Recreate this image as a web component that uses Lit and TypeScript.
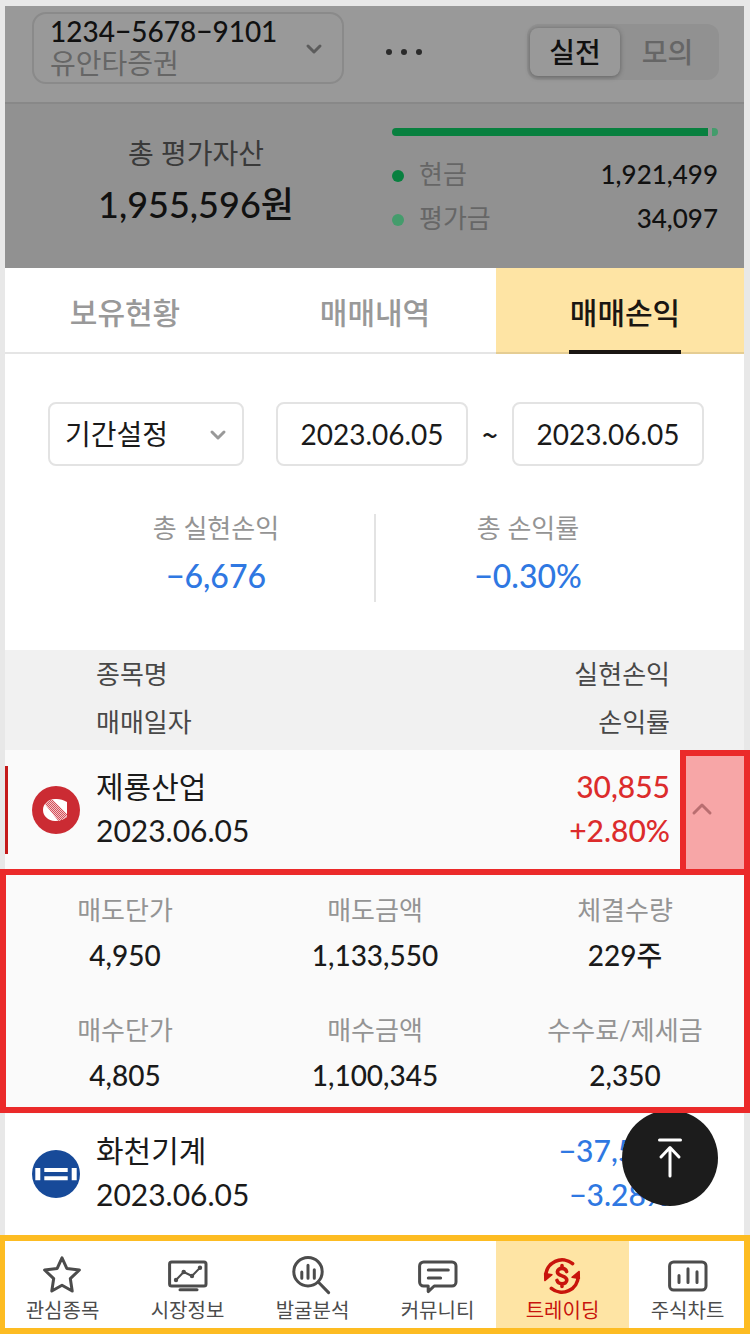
import { LitElement, html, css, svg, nothing } from "lit";
import { customElement, property, state } from "lit/decorators.js";
import { classMap } from "lit/directives/class-map.js";
import { styleMap } from "lit/directives/style-map.js";

const reset = css`
  * {
    box-sizing: border-box;
  }
  button,
  input,
  select {
    font: inherit;
    color: inherit;
    margin: 0;
    padding: 0;
    border: 0;
    border-radius: 0;
    background: none;
    appearance: none;
  }
  button,
  select {
    cursor: pointer;
  }
  p,
  h2,
  dl,
  dd {
    margin: 0;
    font-weight: inherit;
  }
  svg {
    display: block;
    overflow: visible;
    fill: none;
    stroke: currentColor;
    stroke-linecap: round;
    stroke-linejoin: round;
  }
`;

const chevronDown = html`<svg width="16" height="12" viewBox="0 0 16 12" stroke-width="3" aria-hidden="true">
  <path d="M2 4l6 6 6-6" />
</svg>`;

/* ---------- account bar and asset summary ---------- */

@customElement("account-header")
export class AccountHeader extends LitElement {
  @state() private mode = "실전";

  private cash = 1921499;
  private stock = 34097;

  static styles = [
    reset,
    css`
      :host {
        display: block;
        color: #111;
      }
      .bar {
        display: flex;
        align-items: flex-start;
        padding: 12px 31px 18px 32px;
        background: #999;
        border-bottom: 2px solid #888;
      }
      .account {
        display: flex;
        align-items: center;
        justify-content: space-between;
        width: 312px;
        height: 72px;
        padding: 0 20px 0 16px;
        border: 2px solid #8a8a8a;
        border-radius: 14px;
        text-align: left;
        font-size: 28px;
        line-height: 32px;
      }
      .label {
        padding-bottom: 2px;
      }
      .number,
      .broker {
        display: block;
      }
      .number {
        font-weight: 500;
      }
      .broker {
        color: #666;
      }
      .account svg {
        color: #5c5c5c;
      }
      .more {
        display: flex;
        gap: 9px;
        margin: 37px auto 0 42px;
      }
      .more i {
        width: 6px;
        height: 6px;
        border-radius: 50%;
        background: #2b2b2b;
      }
      .modes {
        display: grid;
        grid-template-columns: 90px 95px;
        margin-top: 12px;
        padding: 4px 4px 4px 3px;
        border-radius: 12px;
        background: #919191;
      }
      .mode {
        height: 48px;
        border-radius: 8px;
        font-size: 28px;
        line-height: 48px;
        color: #666;
        font-weight: 500;
      }
      .mode.on {
        background: #999;
        color: #111;
        box-shadow: 0 1px 5px rgba(0, 0, 0, 0.35);
      }
      .assets {
        display: grid;
        grid-template-columns: 392fr 358fr;
        height: 164px;
        background: #919191;
      }
      .total {
        padding-top: 29px;
        text-align: center;
      }
      .caption {
        font-size: 28px;
        line-height: 40px;
        color: #3a3a3a;
      }
      .amount {
        margin-top: 7px;
        font-size: 36px;
        line-height: 48px;
        font-weight: 500;
      }
      .split {
        padding: 24px 32px 0 0;
      }
      .meter {
        display: flex;
        gap: 4px;
        height: 8px;
        margin-bottom: 18px;
        border-radius: 4px;
        overflow: hidden;
      }
      .cash {
        background: #08803f;
      }
      .stock {
        background: #449c6c;
      }
      .line {
        display: flex;
        align-items: flex-start;
        height: 44px;
        font-size: 26px;
        line-height: 40px;
      }
      .dot {
        width: 12px;
        height: 12px;
        margin: 16px 15px 0 0;
        border-radius: 50%;
      }
      .line dt {
        flex: 1;
        color: #666;
      }
      .line dd {
        font-weight: 500;
      }
    `,
  ];

  render() {
    const f = (n: number) => n.toLocaleString("en-US");
    return html`
      <div class="bar">
        <button class="account" aria-haspopup="listbox">
          <span class="label"><span class="number">1234−5678−9101</span><span class="broker">유안타증권</span></span>
          ${chevronDown}
        </button>
        <button class="more" aria-label="더보기"><i></i><i></i><i></i></button>
        <div class="modes" role="group" aria-label="투자 모드">
          ${["실전", "모의"].map(
            (m) => html`<button
              class=${classMap({ mode: true, on: this.mode === m })}
              aria-pressed=${this.mode === m ? "true" : "false"}
              @click=${() => (this.mode = m)}
            >${m}</button>`,
          )}
        </div>
      </div>
      <div class="assets">
        <div class="total">
          <p class="caption">총 평가자산</p>
          <p class="amount">${f(this.cash + this.stock)}원</p>
        </div>
        <div class="split">
          <div class="meter">
            <div class="cash" style=${styleMap({ flex: String(this.cash) })}></div>
            <div class="stock" style=${styleMap({ flex: String(this.stock) })}></div>
          </div>
          <dl>
            <div class="line"><span class="dot cash"></span><dt>현금</dt><dd>${f(this.cash)}</dd></div>
            <div class="line"><span class="dot stock"></span><dt>평가금</dt><dd>${f(this.stock)}</dd></div>
          </dl>
        </div>
      </div>
    `;
  }
}

/* ---------- trade profit table ---------- */

interface Trade {
  name: string;
  date: string;
  profit: string;
  rate: string;
  up: boolean;
  logo: unknown;
  details?: [string, string][];
}

const jeryongLogo = html`<svg width="48" height="48" viewBox="0 0 48 48" aria-hidden="true">
  <defs>
    <pattern id="weave" width="2" height="2" patternUnits="userSpaceOnUse">
      <rect width="2" height="2" fill="#f3c3c6" stroke="none" />
      <rect width="1" height="1" fill="#d4505a" stroke="none" />
      <rect x="1" y="1" width="1" height="1" fill="#d4505a" stroke="none" />
    </pattern>
    <clipPath id="lens"><path d="M23 13C27 12.600 31 13.500 35 16V31C31 34 27 35.200 23 35C16 34.500 11 30 11 24S16 13.500 23 13Z" /></clipPath>
  </defs>
  <circle cx="24" cy="24" r="24" fill="#cb2b33" stroke="none" />
  <g clip-path="url(#lens)" stroke="none">
    <rect x="8" y="10" width="30" height="28" fill="#fff" />
    <path d="M12 17L19 12L36 29L28 37Z" fill="url(#weave)" />
  </g>
</svg>`;

const hwacheonLogo = html`<svg width="48" height="48" viewBox="0 0 48 48" aria-hidden="true">
  <circle cx="24" cy="24" r="24" fill="#174a99" stroke="none" />
  <path d="M3.300 18h5v12.300h-5zM39.700 18h5v12.300h-5zM12.300 18h23.400v4H12.300zM12.300 26.300h23.400v4H12.300z" fill="#fff" stroke="none" />
</svg>`;

@customElement("trade-table")
export class TradeTable extends LitElement {
  @state() private open = "제룡산업";

  private trades: Trade[] = [
    {
      name: "제룡산업",
      date: "2023.06.05",
      profit: "30,855",
      rate: "+2.80%",
      up: true,
      logo: jeryongLogo,
      details: [
        ["매도단가", "4,950"],
        ["매도금액", "1,133,550"],
        ["체결수량", "229주"],
        ["매수단가", "4,805"],
        ["매수금액", "1,100,345"],
        ["수수료/제세금", "2,350"],
      ],
    },
    {
      name: "화천기계",
      date: "2023.06.05",
      profit: "−37,531",
      rate: "−3.28%",
      up: false,
      logo: hwacheonLogo,
    },
  ];

  static styles = [
    reset,
    css`
      :host {
        display: block;
      }
      table {
        width: 100%;
        border-collapse: collapse;
        table-layout: fixed;
      }
      .toggle-col {
        width: 70px;
      }
      th,
      td {
        padding: 0;
        font-weight: 400;
        vertical-align: top;
        text-align: left;
      }
      thead {
        background: #f1f1f1;
        color: #484848;
      }
      thead th {
        height: 100px;
        padding-left: 96px;
        font-size: 26px;
        line-height: 48px;
      }
      thead .right {
        padding-left: 0;
      }
      .right {
        padding-right: 10px;
        text-align: right;
      }
      .open {
        background: #fafafa;
      }
      tbody .right {
        padding-top: 14px;
      }
      .trade {
        font-size: 30px;
        line-height: 44px;
        color: #1a1a1a;
      }
      .trade p {
        white-space: nowrap;
      }
      .up,
      .down {
        font-weight: 500;
      }
      .up {
        color: #dc2c2c;
      }
      .down {
        color: #2f78e2;
      }
      .stock {
        display: flex;
        align-items: center;
        gap: 16px;
        height: 88px;
        margin: 16px 0 15px 5px;
        padding-left: 24px;
        border-left: 3px solid transparent;
      }
      .open .stock {
        border-left-color: #c41a1a;
      }
      .who {
        padding-bottom: 4px;
      }
      .toggle {
        display: block;
        width: 100%;
        height: 119px;
        padding-left: 12px;
        color: #999;
      }
      .open .toggle {
        position: relative;
        z-index: 2;
        padding: 0 0 8px 6px;
        border: 6px solid #eb2a2a;
        border-bottom: 0;
        background: #f7a6a7;
        color: #b96e70;
      }
      .details {
        display: grid;
        grid-template-columns: repeat(3, 1fr);
        row-gap: 30px;
        position: relative;
        z-index: 2;
        margin-bottom: 1px;
        padding: 18px 0 16px;
        outline: 6px solid #eb2a2a;
        outline-offset: -6px;
        text-align: center;
      }
      .details dt {
        font-size: 26px;
        line-height: 46px;
        color: #949494;
      }
      .details dd {
        font-size: 28px;
        line-height: 44px;
        font-weight: 500;
        color: #1a1a1a;
      }
    `,
  ];

  render() {
    return html`
      <table>
        <colgroup><col /><col /><col class="toggle-col" /></colgroup>
        <thead>
          <tr>
            <th scope="col">종목명<br />매매일자</th>
            <th scope="col" class="right">실현손익<br />손익률</th>
            <td></td>
          </tr>
        </thead>
        <tbody>
          ${this.trades.map((t) => this.renderTrade(t))}
        </tbody>
      </table>
    `;
  }

  private renderTrade(t: Trade) {
    const open = this.open === t.name;
    return html`
      <tr class=${classMap({ trade: true, open })}>
        <td>
          <div class="stock">
            ${t.logo}
            <div class="who"><p>${t.name}</p><p>${t.date}</p></div>
          </div>
        </td>
        <td class="right ${t.up ? "up" : "down"}"><p>${t.profit}</p><p>${t.rate}</p></td>
        <td>
          <button
            class="toggle"
            aria-label="${t.name} 상세"
            aria-expanded=${open ? "true" : "false"}
            @click=${() => (this.open = open ? "" : t.name)}
          >
            <svg width="20" height="12" viewBox="0 0 20 12" stroke-width="3" aria-hidden="true">
              <path d=${open ? "M2 10l8-8 8 8" : "M2 2l8 8 8-8"} />
            </svg>
          </button>
        </td>
      </tr>
      ${open && t.details
        ? html`<tr class="open">
            <td colspan="3">
              <dl class="details">
                ${t.details.map(([k, v]) => html`<div><dt>${k}</dt><dd>${v}</dd></div>`)}
              </dl>
            </td>
          </tr>`
        : nothing}
    `;
  }
}

/* ---------- bottom navigation ---------- */

const navIcons: Record<string, unknown> = {
  star: svg`<path d="M20 2.800L24.800 13.400L37.400 15L28.300 23.600L30.200 36L20 30.300L9.800 36L11.700 23.600L2.600 15L15.200 13.400Z" />`,
  market: svg`<rect x="2.600" y="7" width="36.400" height="24" rx="2" />
    <path d="M13 34.700H30" />
    <path d="M9 25L16.700 17L25 21L33 12.700" stroke-width="2" />
    <g fill="currentColor" stroke="none"><circle cx="9" cy="25" r="2.200" /><circle cx="16.700" cy="17" r="2.200" /><circle cx="25" cy="21" r="2.200" /><circle cx="33" cy="12.700" r="2.200" /></g>`,
  search: svg`<circle cx="16" cy="16.700" r="14.200" />
    <path d="M26.500 27.200L36.600 37.600M9.800 17V23.300M16 10.300V23.300M22.300 14.700V23.300" />`,
  talk: svg`<path d="M6.600 7H35a4 4 0 0 1 4 4V27a4 4 0 0 1-4 4H17.200L11.200 36.600V31H6.600a4 4 0 0 1-4-4V11a4 4 0 0 1 4-4Z" />
    <path d="M11.300 15H31.300M11.300 23H23.600" />`,
  trade: svg`<path d="M3.800 21A16.300 16.300 0 0 1 30.600 8.600M36.200 21A16.300 16.300 0 0 1 9.400 33.400" stroke-width="3.600" />
    <path d="M2.800 25.600L2.600 18.500L10 19.700ZM37.200 16.400L37.400 23.500L30 22.300Z" fill="currentColor" stroke-width="1.400" />
    <path d="M20 10.500V13.200M20 28.800V31.500M24.600 16.600C24 14.400 22.300 13.400 20 13.400C17.300 13.400 15.400 14.800 15.400 17C15.400 21.800 24.800 20 24.800 25C24.800 27.300 22.800 28.700 20 28.700C17.400 28.700 15.600 27.600 15 25.400" stroke-width="3.600" />`,
  chart: svg`<rect x="2.600" y="7" width="36.400" height="28" rx="4" />
    <path d="M12 20.600V27.600M21 13.800V27.600M30 16.800V27.600" />`,
};

@customElement("bottom-nav")
export class BottomNav extends LitElement {
  @property() current = "트레이딩";

  private items: [string, string][] = [
    ["관심종목", "star"],
    ["시장정보", "market"],
    ["발굴분석", "search"],
    ["커뮤니티", "talk"],
    ["트레이딩", "trade"],
    ["주식차트", "chart"],
  ];

  static styles = [
    reset,
    css`
      :host {
        display: block;
        position: relative;
        z-index: 3;
      }
      nav {
        display: grid;
        grid-template-columns: repeat(6, 1fr);
        background: #fff;
        border-bottom: 6px solid #fdbc22;
        border-top: 6px solid #fdbc22;
      }
      nav::after {
        content: "";
        position: absolute;
        inset: 0;
        border: solid #fdbc22;
        border-width: 0 6px 0 5px;
        pointer-events: none;
      }
      a {
        display: flex;
        flex-direction: column;
        align-items: center;
        gap: 3px;
        padding: 14px 0 6px;
        font-size: 20px;
        line-height: 24px;
        color: #4c4c4c;
        text-decoration: none;
      }
      .on {
        margin: 0 -4px;
        background: #fee4a4;
        color: #c8140c;
      }
    `,
  ];

  render() {
    return html`<nav>
      ${this.items.map(
        ([label, icon]) => html`<a
          href="#${icon}"
          class=${this.current === label ? "on" : ""}
          aria-current=${this.current === label ? "page" : "false"}
        >
          <svg width="40" height="40" viewBox="1 0 40 40" stroke-width="3" aria-hidden="true">${navIcons[icon]}</svg>
          <span>${label}</span>
        </a>`,
      )}
    </nav>`;
  }
}

/* ---------- page ---------- */

@customElement("app-root")
export class AppRoot extends LitElement {
  @state() private tab = "매매손익";

  static styles = [
    reset,
    css`
      :host {
        display: flex;
        flex-direction: column;
        position: relative;
        min-height: 100vh;
        background: #fff;
        font-family: Lato, "Noto Sans CJK KR", sans-serif;
        color: #1a1a1a;
        overflow: hidden;
      }
      :host::after {
        content: "";
        position: absolute;
        inset: 0;
        border: solid #e8e8e8;
        border-width: 6px 6px 0 5px;
        pointer-events: none;
      }
      main {
        flex: 1;
      }
      .tabs {
        display: grid;
        grid-template-columns: repeat(3, 1fr);
      }
      .tab {
        display: flex;
        justify-content: center;
        border-bottom: 2px solid #e5e5e5;
        font-size: 30px;
        font-weight: 500;
        line-height: 88px;
        color: #999;
      }
      .tab.on {
        margin-left: -4px;
        padding-left: 4px;
        background: #fee4a4;
        border-color: #e5cd93;
        color: #1a1612;
      }
      .tab span {
        height: 86px;
        margin-bottom: -2px;
        padding: 0 1px;
      }
      .tab.on span {
        border-bottom: 4px solid #1a1612;
      }
      .filters {
        display: grid;
        grid-template-columns: 196fr 32px 192fr 44px 192fr;
        align-items: center;
        padding: 48px 46px 0 48px;
        font-size: 28px;
        line-height: 60px;
      }
      .field {
        width: 100%;
        height: 64px;
        border: 2px solid #e3e3e3;
        border-radius: 8px;
        background: #fff;
      }
      .period {
        display: grid;
        grid-template-columns: 1fr 42px;
        align-items: center;
        color: #999;
      }
      .period select {
        grid-area: 1 / 1 / 2 / 3;
        padding-left: 15px;
        color: #1a1a1a;
      }
      .period svg {
        grid-area: 1 / 2;
        justify-self: start;
        margin-left: 8px;
        pointer-events: none;
      }
      .date {
        grid-column: 3;
        min-width: 0;
        text-align: center;
      }
      .date.end {
        grid-column: 5;
      }
      .tilde {
        text-align: center;
        font-family: "Noto Sans CJK KR", sans-serif;
        font-weight: 500;
      }
      .totals {
        display: grid;
        grid-template-columns: 1fr 2px 1fr;
        padding: 48px 64px;
        text-align: center;
      }
      .totals div {
        height: 88px;
        padding-right: 6px;
      }
      .rule {
        background: #e3e3e3;
      }
      .totals dt {
        font-size: 26px;
        line-height: 28px;
        color: #949494;
      }
      .totals dd {
        margin-top: 12px;
        font-size: 32px;
        line-height: 44px;
        font-weight: 500;
        color: #2f78e2;
      }
      .top {
        display: grid;
        place-items: center;
        position: absolute;
        z-index: 1;
        right: 32px;
        bottom: 128px;
        width: 96px;
        height: 96px;
        border-radius: 50%;
        background: #1c1c1c;
        color: #fff;
      }
    `,
  ];

  render() {
    return html`
      <account-header></account-header>
      <main>
        <div class="tabs" role="tablist">
          ${["보유현황", "매매내역", "매매손익"].map(
            (t) => html`<button
              role="tab"
              class=${classMap({ tab: true, on: this.tab === t })}
              aria-selected=${this.tab === t ? "true" : "false"}
              @click=${() => (this.tab = t)}
            ><span>${t}</span></button>`,
          )}
        </div>
        <form class="filters">
          <div class="period">
            <select class="field" aria-label="기간">
              <option>기간설정</option>
            </select>
            ${chevronDown}
          </div>
          <input class="field date" aria-label="시작일" value="2023.06.05" />
          <span class="tilde">~</span>
          <input class="field date end" aria-label="종료일" value="2023.06.05" />
        </form>
        <dl class="totals">
          <div><dt>총 실현손익</dt><dd>−6,676</dd></div>
          <span class="rule"></span>
          <div><dt>총 손익률</dt><dd>−0.30%</dd></div>
        </dl>
        <trade-table></trade-table>
      </main>
      <button class="top" aria-label="맨 위로">
        <svg width="26" height="40" viewBox="0 0 26 40" stroke-width="3" aria-hidden="true">
          <path d="M2.500 2H23.500M13 10V38M4 19L13 9.500L22 19" />
        </svg>
      </button>
      <bottom-nav></bottom-nav>
    `;
  }
}
